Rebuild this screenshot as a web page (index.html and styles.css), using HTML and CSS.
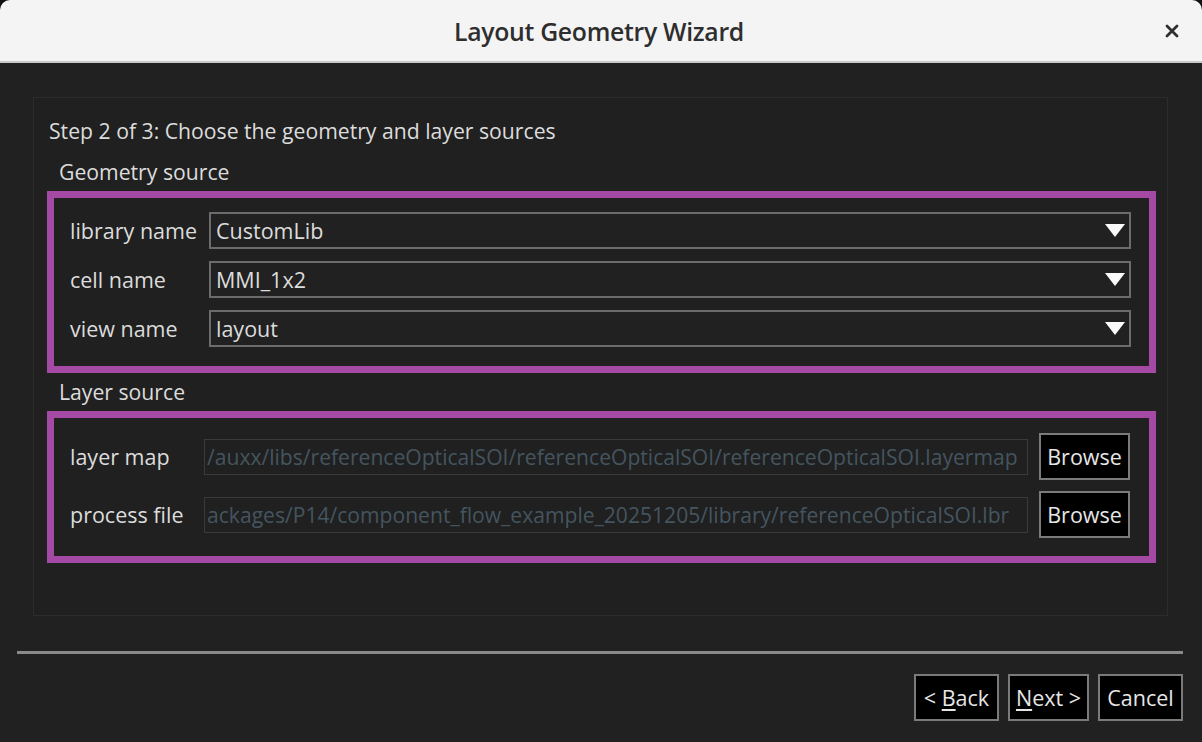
FILE: index.html
```html
<!DOCTYPE html>
<html lang="en">
<head>
    <meta charset="UTF-8">
    <meta name="viewport" content="width=device-width, initial-scale=1.0">
    <title>Layout Geometry Wizard</title>
    <link rel="stylesheet" href="styles.css">
</head>
<body>
    <div class="window">
        <div class="titlebar">
            <span></span>
            <h1>Layout Geometry Wizard</h1>
            <button class="close" aria-label="Close">
                <svg width="14" height="14" viewBox="0 0 14 14"><path d="M2 2 L12 12 M12 2 L2 12" stroke="#2f2f2f" stroke-width="2.8" stroke-linecap="round"/></svg>
            </button>
        </div>

        <div class="body">
            <div class="page">
                <p class="step">Step 2 of 3: Choose the geometry and layer sources</p>

                <p class="group-title">Geometry source</p>
                <div class="group geometry">
                    <label>library name</label>
                    <div class="combo"><span>CustomLib</span><i class="arrow"></i></div>
                    <label>cell name</label>
                    <div class="combo"><span>MMI_1x2</span><i class="arrow"></i></div>
                    <label>view name</label>
                    <div class="combo"><span>layout</span><i class="arrow"></i></div>
                </div>

                <p class="group-title">Layer source</p>
                <div class="group layers">
                    <label>layer map</label>
                    <div class="path"><span>/auxx/libs/referenceOpticalSOI/referenceOpticalSOI/referenceOpticalSOI.layermap</span></div>
                    <button class="btn">Browse</button>
                    <label>process file</label>
                    <div class="path"><span>ackages/P14/component_flow_example_20251205/library/referenceOpticalSOI.lbr</span></div>
                    <button class="btn">Browse</button>
                </div>
            </div>

            <hr class="sep">

            <div class="actions">
                <button class="btn back">&lt; <u>B</u>ack</button>
                <button class="btn next"><u>N</u>ext &gt;</button>
                <button class="btn cancel">Cancel</button>
            </div>
        </div>
    </div>
</body>
</html>
```

FILE: styles.css
```css
html, body {
    margin: 0;
    padding: 0;
    background: #111;
}
body {
    font-family: "Open Sans", Lato, sans-serif;
    color: #dcdcdc;
}
.window {
    width: 1202px;
    height: 742px;
    background: #212121;
    border-radius: 10px 10px 0 0;
    overflow: hidden;
    display: flex;
    flex-direction: column;
}

/* title bar */
.titlebar {
    height: 61px;
    background: #f4f4f4;
    border-bottom: 2px solid #c9c9c9;
    display: grid;
    grid-template-columns: 1fr auto 1fr;
    align-items: center;
}
.titlebar h1 {
    margin: 0 4px 0 0;
    font-size: 24.8px;
    font-weight: 600;
    color: #2e2e2e;
    letter-spacing: -0.3px;
}
.close {
    justify-self: end;
    margin-right: 23px;
    background: none;
    border: none;
    padding: 0;
    display: flex;
}

.body {
    flex: 1;
    display: flex;
    flex-direction: column;
}
.page {
    margin: 34px 34px 0 33px;
    height: 519px;
    box-sizing: border-box;
    background: #202020;
    border: 1px solid #2c2c2c;
    padding: 20px 11px 0 13px;
}
.step {
    margin: 0 0 0 2px;
    font-size: 21.2px;
    line-height: 26px;
}
.group-title {
    margin: 15px 0 6px 12px;
    font-size: 21.2px;
    line-height: 26px;
}
.group + .group-title {
    margin-top: 6px;
}
.group {
    border: 7px solid #a449a4;
    display: grid;
    align-items: center;
    font-size: 21.5px;
    line-height: 26px;
}
.group label {
    white-space: nowrap;
}

/* geometry comboboxes */
.geometry {
    grid-template-columns: 139px 1fr;
    row-gap: 12px;
    padding: 14px 18px 19px 16px;
}
.combo {
    height: 37px;
    box-sizing: border-box;
    border: 2px solid #6c6c6c;
    background: #212121;
    display: flex;
    align-items: center;
    justify-content: space-between;
    padding: 0 4px 0 5px;
}
.arrow {
    width: 0;
    height: 0;
    border-left: 10px solid transparent;
    border-right: 10px solid transparent;
    border-top: 13px solid #fafafa;
    filter: blur(0.4px);
}

/* layer file pickers */
.layers {
    grid-template-columns: 123px 1fr 91px;
    column-gap: 11px;
    row-gap: 11px;
    padding: 15px 19px 18px 16px;
}
.path {
    height: 36px;
    box-sizing: border-box;
    border: 1px solid #3a3a3a;
    display: flex;
    align-items: center;
    overflow: hidden;
    padding: 0 2px;
}
.path span {
    color: #44555f;
    white-space: nowrap;
    font-size: 21.1px;
}

.btn {
    height: 47px;
    background: #000;
    color: #e6e6e6;
    border: 2px solid #7a7a7a;
    font-family: inherit;
    font-size: 21.5px;
    padding: 0 2px;
}
.btn u {
    text-decoration-thickness: 2px;
    text-underline-offset: 3px;
}

.sep {
    margin: 35px 19px 0 17px;
    border: none;
    height: 3px;
    background: #8a8a8a;
}

.actions {
    display: flex;
    justify-content: flex-end;
    gap: 9px;
    margin: 20px 19px 0 0;
}
.back { width: 85px; }
.next { width: 81px; }
.cancel { width: 85px; }
```
